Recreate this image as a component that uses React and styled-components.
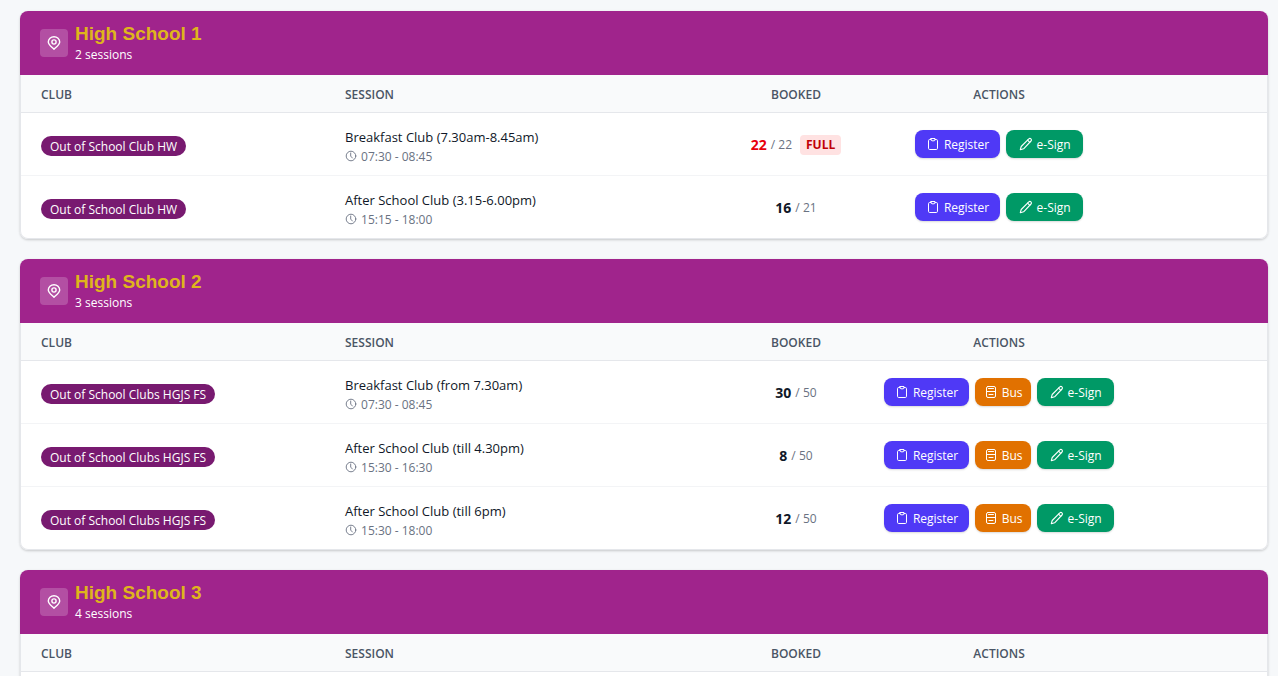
import React from "react";
import styled, { createGlobalStyle } from "styled-components";

const GlobalStyle = createGlobalStyle`
  *, *::before, *::after {
    box-sizing: border-box;
  }
  body {
    margin: 0;
    background: #f6f8fa;
    color: #101828;
    font-family: "Open Sans", "Noto Sans", sans-serif;
    font-size: 12px;
    line-height: 16px;
  }
`;

const Page = styled.main`
  display: flex;
  flex-direction: column;
  gap: 20px;
  height: 100vh;
  padding: 11px 10px 0 20px;
  overflow: hidden;
`;

const Card = styled.section`
  flex: none;
  border-radius: 8px;
  background: #fff;
  box-shadow: 0 1px 3px rgba(0, 0, 0, 0.12), 0 1px 2px rgba(0, 0, 0, 0.08);
`;

const CardHeader = styled.header`
  display: flex;
  align-items: center;
  gap: 7px;
  height: 64px;
  padding: 0 20px;
  border-radius: 8px 8px 0 0;
  background: #a0248c;
  color: #fff;
`;

const PinBox = styled.span`
  display: flex;
  align-items: center;
  justify-content: center;
  width: 28px;
  height: 28px;
  border-radius: 4px;
  background: rgba(255, 255, 255, 0.2);
`;

const SchoolName = styled.h2`
  margin: 0;
  color: #dfb51c;
  font-family: "Liberation Sans", Arial, sans-serif;
  font-size: 19px;
  line-height: 24px;
  font-weight: 700;
`;

const SessionCount = styled.p`
  margin: 0;
  font-size: 12px;
  line-height: 18px;
`;

const Table = styled.table`
  width: 100%;
  table-layout: fixed;
  border-collapse: separate;
  border-spacing: 0;
  border: 1px solid #e5e7eb;
  border-top: 0;
  border-radius: 0 0 8px 8px;
`;

const Col = styled.col`
  width: ${(props) => props.$width};
`;

const HeadCell = styled.th`
  height: 38px;
  padding: 2px 20px 0;
  border-bottom: 1px solid #e5e7eb;
  background: #f9fafb;
  color: #4a5565;
  font-size: 12px;
  font-weight: 600;
  text-align: ${(props) => props.$align || "left"};
`;

const Row = styled.tr`
  &:not(:last-child) > td {
    border-bottom: 1px solid #f3f4f6;
  }
`;

const Cell = styled.td`
  height: ${(props) => (props.$last ? "62px" : "63px")};
  padding: 0 20px;
  vertical-align: middle;
`;

const ClubBadge = styled.span`
  display: inline-block;
  margin-top: 4px;
  padding: 1px 9px 0;
  border-radius: 10px;
  background: #781a70;
  color: #fff;
  font-size: 12px;
  line-height: 19px;
  white-space: nowrap;
`;

const SessionInfo = styled.div`
  padding-top: 4px;
`;

const SessionName = styled.div`
  font-size: 13px;
  line-height: 20px;
`;

const SessionTime = styled.div`
  display: flex;
  align-items: center;
  gap: 4px;
  color: #6a7282;
  font-size: 12px;
  line-height: 19px;
`;

const Booked = styled.div`
  display: flex;
  align-items: center;
  justify-content: center;
  gap: 4px;
  padding-top: 1px;
  color: #6a7282;
  white-space: nowrap;
`;

const BookedCount = styled.strong`
  color: ${(props) => (props.$full ? "#e7000b" : "#101828")};
  font-size: 14px;
  font-weight: 700;
`;

const FullBadge = styled.span`
  margin-left: 4px;
  padding: 0 6px;
  border-radius: 4px;
  background: #ffe2e2;
  color: #c10007;
  font-weight: 700;
  line-height: 20px;
`;

const Actions = styled.div`
  display: flex;
  justify-content: center;
  gap: 6px;
`;

const ActionButton = styled.button`
  display: flex;
  flex: none;
  align-items: center;
  justify-content: center;
  gap: 4px;
  width: ${(props) => props.$width};
  height: 28px;
  padding: 0;
  border: 0;
  border-radius: 8px;
  background: ${(props) => props.$color};
  color: #fff;
  font-family: inherit;
  font-size: 12px;
  line-height: 16px;
  box-shadow: 0 1px 2px rgba(0, 0, 0, 0.15);
  cursor: pointer;
`;

const ButtonLabel = styled.span`
  padding-top: 2px;
`;

const Icon = styled.svg`
  flex: none;
  width: ${(props) => props.$size || 14}px;
  height: ${(props) => props.$size || 14}px;
  fill: none;
  stroke: currentColor;
  stroke-linecap: round;
  stroke-linejoin: round;
`;

const PinIcon = () => (
  <Icon $size={14} viewBox="0 0 14 14" strokeWidth="1.4" aria-hidden="true">
    <path d="M7 13.2C4.700 11 1.300 8.800 1.300 6a5.700 5.300 0 0 1 11.400 0C12.700 8.800 9.300 11 7 13.200Z" />
    <circle cx="7" cy="6" r="2.1" />
  </Icon>
);

const ClockIcon = () => (
  <Icon $size={12} viewBox="0 0 12 12" strokeWidth="0.9" aria-hidden="true">
    <circle cx="6" cy="6" r="4.8" />
    <path d="M5.7 3v3.1l1.7 1.9" />
  </Icon>
);

const ClipboardIcon = () => (
  <Icon viewBox="0 0 14 14" strokeWidth="1" aria-hidden="true">
    <path d="M5 2.5H3.700a1.200 1.200 0 0 0-1.200 1.200v7.600a1.200 1.200 0 0 0 1.200 1.200h6.600a1.200 1.200 0 0 0 1.200-1.200V3.700a1.200 1.200 0 0 0-1.200-1.200H9" />
    <path d="M5 1.5h4v1.300a1 1 0 0 1-1 1H6a1 1 0 0 1-1-1Z" />
  </Icon>
);

const BusIcon = () => (
  <Icon viewBox="0 0 14 14" strokeWidth="1" aria-hidden="true">
    <rect x="2.5" y="1.5" width="9" height="11" rx="1.5" />
    <path d="M4.500 3.500h5M2.500 6.500h9M5 9.500h4" />
  </Icon>
);

const PencilIcon = () => (
  <Icon viewBox="0 0 14 14" strokeWidth="1.1" aria-hidden="true">
    <path d="M9.8 1.9a1.45 1.45 0 0 1 2.2 2.1L4.6 11.8 1.3 12.7 2.2 9.5Z" />
    <path d="M8.6 3.2l2.2 2.1" />
  </Icon>
);

const schools = [
  {
    name: "High School 1",
    club: "Out of School Club HW",
    count: 2,
    sessions: [
      { name: "Breakfast Club (7.30am-8.45am)", time: "07:30 - 08:45", booked: 22, places: 22 },
      { name: "After School Club (3.15-6.00pm)", time: "15:15 - 18:00", booked: 16, places: 21 },
    ],
  },
  {
    name: "High School 2",
    club: "Out of School Clubs HGJS FS",
    count: 3,
    bus: true,
    sessions: [
      { name: "Breakfast Club (from 7.30am)", time: "07:30 - 08:45", booked: 30, places: 50 },
      { name: "After School Club (till 4.30pm)", time: "15:30 - 16:30", booked: 8, places: 50 },
      { name: "After School Club (till 6pm)", time: "15:30 - 18:00", booked: 12, places: 50 },
    ],
  },
  {
    name: "High School 3",
    count: 4,
    sessions: [],
  },
];

const SessionRow = ({ session, club, bus, last }) => {
  const full = session.booked >= session.places;
  return (
    <Row>
      <Cell $last={last}>
        <ClubBadge>{club}</ClubBadge>
      </Cell>
      <Cell $last={last}>
        <SessionInfo>
          <SessionName>{session.name}</SessionName>
          <SessionTime>
            <ClockIcon />
            {session.time}
          </SessionTime>
        </SessionInfo>
      </Cell>
      <Cell $last={last}>
        <Booked>
          <BookedCount $full={full}>{session.booked}</BookedCount>
          <span>/ {session.places}</span>
          {full && <FullBadge>FULL</FullBadge>}
        </Booked>
      </Cell>
      <Cell $last={last}>
        <Actions>
          <ActionButton type="button" $color="#4f39f6" $width="85px">
            <ClipboardIcon />
            <ButtonLabel>Register</ButtonLabel>
          </ActionButton>
          {bus && (
            <ActionButton type="button" $color="#e17100" $width="56px">
              <BusIcon />
              <ButtonLabel>Bus</ButtonLabel>
            </ActionButton>
          )}
          <ActionButton type="button" $color="#009966" $width="77px">
            <PencilIcon />
            <ButtonLabel>e-Sign</ButtonLabel>
          </ActionButton>
        </Actions>
      </Cell>
      <Cell $last={last} />
    </Row>
  );
};

const SchoolCard = ({ school }) => (
  <Card>
    <CardHeader>
      <PinBox>
        <PinIcon />
      </PinBox>
      <div>
        <SchoolName>{school.name}</SchoolName>
        <SessionCount>{school.count} sessions</SessionCount>
      </div>
    </CardHeader>
    <Table>
      <colgroup>
        <Col $width="24.4%" />
        <Col $width="32.3%" />
        <Col $width="11%" />
        <Col $width="21.6%" />
        <Col />
      </colgroup>
      <thead>
        <tr>
          <HeadCell scope="col">CLUB</HeadCell>
          <HeadCell scope="col">SESSION</HeadCell>
          <HeadCell scope="col" $align="center">BOOKED</HeadCell>
          <HeadCell scope="col" $align="center">ACTIONS</HeadCell>
          <HeadCell as="td" />
        </tr>
      </thead>
      <tbody>
        {school.sessions.map((session, index) => (
          <SessionRow
            key={session.name}
            session={session}
            club={school.club}
            bus={school.bus}
            last={index === school.sessions.length - 1}
          />
        ))}
        {/* blank row while the sessions are not loaded */}
        {school.sessions.length === 0 && (
          <Row>
            <Cell colSpan={5} />
          </Row>
        )}
      </tbody>
    </Table>
  </Card>
);

const App = () => {
  return (
    <>
      <GlobalStyle />
      <Page>
        {schools.map((school) => (
          <SchoolCard key={school.name} school={school} />
        ))}
      </Page>
    </>
  );
};

export default App;
